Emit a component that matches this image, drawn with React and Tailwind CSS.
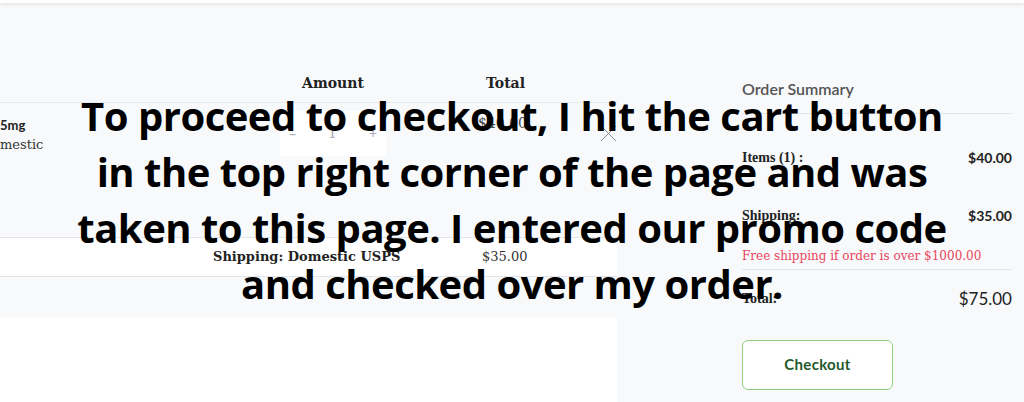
import React from 'react';

const serif = { fontFamily: '"DejaVu Serif", "Liberation Serif", serif' };
const narrowSerif = { fontFamily: '"Liberation Serif", "DejaVu Serif", serif' };

function OrderRow({ label, value, valueClass = '' }) {
  return (
    <div className="flex items-start justify-between">
      <span className="text-[14px] font-bold text-[#222]" style={narrowSerif}>{label}</span>
      <span className={`font-['Lato',sans-serif] ${valueClass}`}>{value}</span>
    </div>
  );
}

export default function App() {
  return (
    <div className="relative w-[1024px] h-[402px] overflow-hidden bg-[#f8f9fb]">
      <div className="h-[3px] bg-white shadow-[0_1px_4px_rgba(0,0,0,0.12)]" />

      <div className="flex">
        {/* cart table */}
        <div className="w-[617px] flex flex-col">
          <div className="h-[99px] flex items-end pb-[8px] text-[14px] font-bold text-[#222]" style={serif}>
            <div className="w-[280px]" />
            <div className="w-[106px] text-center">Amount</div>
            <div className="ml-[100px]">Total</div>
          </div>
          <div className="h-[135px] border-t border-[#e6e8ec] relative">
            <div className="absolute left-0 top-[12px] leading-[20px]">
              <div className="text-[13px] font-bold text-[#222] font-['Lato',sans-serif]">5mg</div>
              <div className="text-[13px] text-[#333]" style={serif}>mestic</div>
            </div>
            <div className="absolute left-[280px] top-[8px] w-[106px] h-[45px] bg-white flex items-center justify-between px-[9px] text-[14px] text-[#aab]">
              <span>–</span>
              <span style={serif}>1</span>
              <span>+</span>
            </div>
            <div className="absolute left-[478px] top-[10px] text-[14px] text-[#444]" style={serif}>$40.00</div>
            <svg className="absolute left-[600px] top-[22px]" width="17" height="17" viewBox="0 0 17 17" fill="none" stroke="#888" strokeWidth="1">
              <path d="M1 1l15 15M16 1L1 16" />
            </svg>
          </div>
          <div className="h-[40px] bg-white border-t border-b border-[#e3e5ea] flex items-center">
            <div className="w-[213px]" />
            <div className="w-[269px] text-[13px] font-bold text-[#222]" style={serif}>Shipping: Domestic USPS</div>
            <div className="text-[13px] text-[#333]" style={serif}>$35.00</div>
          </div>
          <div className="h-[40px]" />
          <div className="h-[120px] bg-white rounded-tr-[4px]" />
        </div>

        {/* order summary */}
        <div className="ml-[125px] w-[270px] pt-[74px]">
          <div className="text-[16px] font-semibold text-[#555] font-['Lato',sans-serif] pb-[12px] border-b border-[#e3e5ea]">Order Summary</div>
          <div className="pt-[33px]">
            <OrderRow label="Items (1) :" value="$40.00" valueClass="text-[14px] font-bold text-[#222]" />
          </div>
          <div className="pt-[37px]">
            <OrderRow label="Shipping:" value="$35.00" valueClass="text-[14px] font-bold text-[#222]" />
            <div className="mt-[21px] text-[12px] text-[#e8455c] pb-[4px] border-b border-[#e3e5ea]" style={serif}>
              Free shipping if order is over $1000.00
            </div>
          </div>
          <div className="pt-[16px] flex items-center justify-between">
            <span className="text-[14px] font-bold text-[#222]" style={narrowSerif}>Total:</span>
            <span className="text-[17px] text-[#222] font-['Lato',sans-serif]">$75.00</span>
          </div>
          <button className="mt-[28px] w-[151px] h-[50px] rounded-[6px] border border-[#8fcf7f] bg-white text-[15px] font-bold tracking-[0.3px] text-[#1f5a2c] font-['Lato',sans-serif]">
            Checkout
          </button>
        </div>
      </div>

      {/* caption overlay */}
      <div className="absolute inset-x-0 top-[88px] text-center text-[40px] leading-[56px] font-bold text-black font-['Open_Sans',sans-serif] tracking-[-0.5px]">
        To proceed to checkout, I hit the cart button<br />
        in the top right corner of the page and was<br />
        taken to this page. I entered our promo code<br />
        and checked over my order.
      </div>
    </div>
  );
}
